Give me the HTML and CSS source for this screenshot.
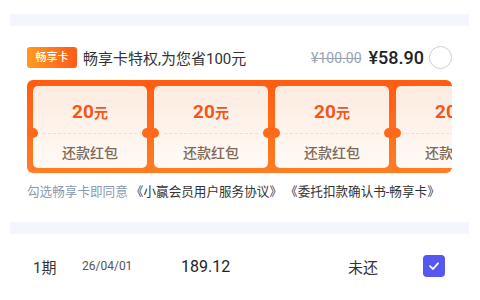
FILE: index.html
```html
<!DOCTYPE html>
<html lang="zh-CN">
<head>
<meta charset="utf-8">
<link rel="stylesheet" href="styles.css">
</head>
<body>
<div class="page">
  <div class="band"></div>
  <div class="section">
    <div class="head">
      <span class="badge">畅享卡</span>
      <span class="title">畅享卡特权,为您省100元</span>
      <span class="old">¥100.00</span>
      <span class="price">¥58.90</span>
      <span class="radio"></span>
    </div>
    <div class="coupons">
      <div class="coupon"><div class="amt">20<small>元</small></div><div class="name">还款红包</div></div>
      <div class="coupon"><div class="amt">20<small>元</small></div><div class="name">还款红包</div></div>
      <div class="coupon"><div class="amt">20<small>元</small></div><div class="name">还款红包</div></div>
      <div class="coupon"><div class="amt">20<small>元</small></div><div class="name">还款红包</div></div>
    </div>
    <p class="agree"><span class="muted">勾选畅享卡即同意</span> 《小赢会员用户服务协议》 《委托扣款确认书-畅享卡》</p>
  </div>
  <div class="band band2"></div>
  <div class="row">
    <span class="period">1期</span>
    <span class="date">26/04/01</span>
    <span class="amount">189.12</span>
    <span class="status">未还</span>
    <span class="check"><svg width="14" height="14" viewBox="0 0 14 14"><path d="M3 7.2 L6 10 L11 4.3" fill="none" stroke="#fff" stroke-width="1.8" stroke-linecap="round" stroke-linejoin="round"/></svg></span>
  </div>
</div>
</body>
</html>
```
FILE: styles.css
```css
* { box-sizing: border-box; }
body {
  margin: 0;
  background: #fff;
  font-family: Roboto, "Noto Sans CJK SC", sans-serif;
  color: #333;
}
.page { padding: 14px 11px 0 10px; }
.band { height: 12px; background: #f3f6fc; }
.section { padding: 0 17px; }
.head {
  margin-top: 21px;
  height: 21px;
  display: flex;
  align-items: center;
}
.badge {
  width: 50px;
  height: 21px;
  border-radius: 3px;
  background: linear-gradient(90deg, #ff9a1e, #ff5a1a);
  color: #fff;
  font-size: 11px;
  font-weight: 500;
  line-height: 21px;
  text-align: center;
  margin-right: 6px;
}
.title {
  font-size: 15px;
  color: #333;
  flex: 1;
  white-space: nowrap;
}
.old {
  font-size: 14px;
  color: #9aa3b0;
  text-decoration: line-through;
  margin-right: 7px;
}
.price {
  font-size: 18px;
  font-weight: 500;
  color: #222;
}
.radio {
  width: 23px;
  height: 23px;
  border: 1px solid #c9cdd8;
  border-radius: 50%;
  margin-left: 5px;
}
.coupons {
  margin-top: 12px;
  height: 93px;
  border-radius: 6px;
  background: linear-gradient(180deg, #ff5c12, #ff7d24);
  padding: 6px 0 5px 6px;
  display: flex;
  gap: 7px;
  overflow: hidden;
}
.coupon {
  position: relative;
  flex: 0 0 114px;
  height: 82px;
  border-radius: 5px;
  background: linear-gradient(180deg, #fdebe0, #fffaf6);
  text-align: center;
}
.coupon::before, .coupon::after {
  content: "";
  position: absolute;
  top: 42px;
  width: 10px;
  height: 10px;
  border-radius: 50%;
  background: #ff6a1a;
}
.coupon::before { left: -5px; }
.coupon::after { right: -5px; }
.amt {
  height: 47px;
  padding-top: 15px;
  line-height: 22px;
  font-size: 19px;
  font-weight: 700;
  color: #f2561a;
}
.amt small { font-size: 14px; font-weight: 600; }
.name {
  margin: 0 10px;
  border-top: 1px dashed #f3dccd;
  padding-top: 9px;
  line-height: 20px;
  font-size: 14px;
  font-weight: 500;
  color: #7b6a58;
}
.agree {
  margin: 11px 0 0;
  line-height: 16px;
  font-size: 12.6px;
  color: #333;
  white-space: nowrap;
}
.muted { color: #8a9ab2; }
.band2 { margin-top: 22px; }
.row {
  height: 64px;
  padding-left: 23px;
  display: grid;
  grid-template-columns: 49px 99px 167px 75px 22px;
  align-items: center;
}
.period { font-size: 15px; color: #333; }
.date { font-size: 12px; color: #555; }
.amount { font-size: 16px; font-weight: 400; color: #222; }
.status { font-size: 15px; color: #333; }
.check {
  width: 22px;
  height: 22px;
  border-radius: 4px;
  background: #5657f0;
  display: flex;
  align-items: center;
  justify-content: center;
}
```
